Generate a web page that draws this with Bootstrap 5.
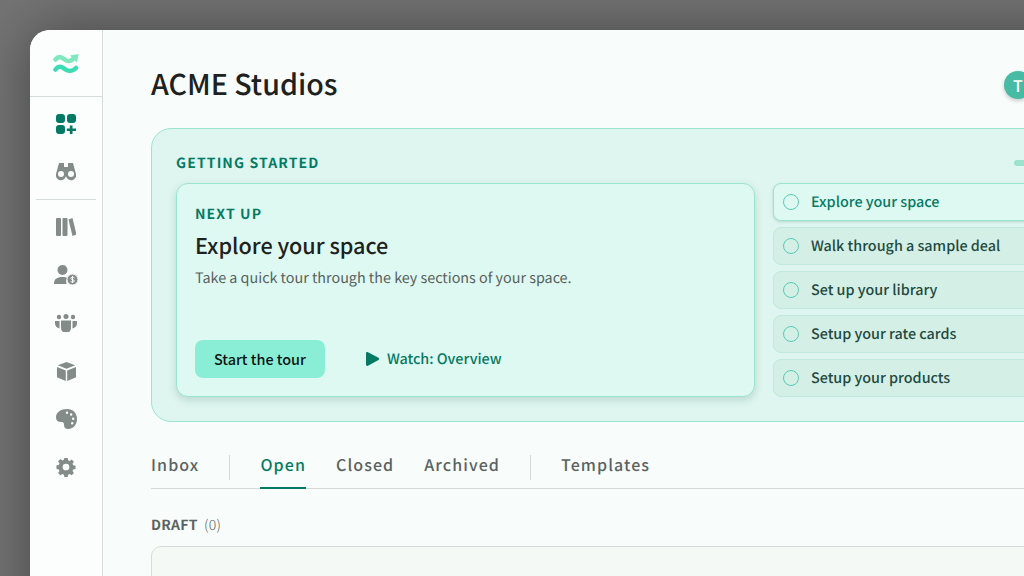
<!DOCTYPE html>
<html lang="en">
<head>
  <meta charset="UTF-8" />
  <title>ACME Studios</title>
  <link href="https://cdn.jsdelivr.net/npm/bootstrap@5.3.3/dist/css/bootstrap.min.css" rel="stylesheet" />
  <style>
    html, body { height: 100%; overflow: hidden; }
    body {
      font-family: "Noto Sans CJK SC", "Noto Sans", sans-serif;
      text-rendering: geometricPrecision;
      background: #747474;
      padding: 30px 0 0 30px;
    }
    .app-window {
      width: 1100px; height: 700px; border-radius: 20px 0 0 0; overflow: hidden;
      background: #f8fcfb; box-shadow: 0 0 60px rgba(0,0,0,.4);
    }
    .side-rail { width: 73px; background: #fcfefd; border-right: 1px solid #d6dcda; }
    .rail-logo { height: 67px; border-bottom: 1px solid #d6dcda; }
    .rail-icon { height: 48px; }
    .rail-icon.is-first { margin-top: 3px; }
    .rail-rule { width: 60px; height: 1px; background: #d6dcda; margin: 3px auto; }
    .main-area { padding: 33px 0 0 48px; width: 997px; }
    .page-title { font-size: 28.6px; font-weight: 500; line-height: 42px; color: #1d2120; margin: 0 0 2px; }
    .avatar-dot {
      width: 28px; height: 28px; border-radius: 50%; background: #48bba4; color: #fff;
      font-size: 16px; font-weight: 500; box-shadow: 0 2px 4px rgba(0,0,0,.2); margin-right: 68px;
    }
    .start-panel {
      margin-top: 21px; height: 294px; padding: 24px 24px 0; background: #def6ef;
      border: 1px solid #9be4cf; border-radius: 20px;
    }
    .eyebrow { font-size: 14px; font-weight: 700; letter-spacing: 1.12px; line-height: 20px; color: #047a65; }
    .progress-tick { width: 61px; height: 6px; border-radius: 3px; background: #9ce2cd; }
    .card-row { margin-top: 10px; }
    .next-card {
      width: 579px; height: 214px; padding: 20px 18px 18px; background: #def9f1;
      border: 1px solid #9be4cf; border-radius: 12px; box-shadow: 0 3px 8px rgba(0,60,50,.16);
    }
    .next-title { font-size: 21.6px; font-weight: 500; line-height: 30px; color: #1d2120; margin: 7px 0 0; }
    .next-copy { font-size: 14.35px; line-height: 22px; color: #59615f; margin: 6px 0 0; }
    .tour-btn {
      background: #8aedd6; border: 0; border-radius: 8px; height: 38px; padding: 0 19px;
      font-size: 14.4px; font-weight: 500; color: #0d1412;
    }
    .tour-btn:hover { background: #8aedd6; color: #0d1412; }
    .watch-link { font-size: 14.35px; font-weight: 500; color: #047a65; text-decoration: none; margin-left: 41px; gap: 8px; }
    .step-list { width: 300px; margin-left: 18px; gap: 6px; }
    .step-row {
      height: 38px; padding-left: 9px; gap: 12px; background: #d3efe6; border: 1px solid #c1e8dc;
      border-radius: 8px; font-size: 14.35px; font-weight: 500; color: #1f4a41;
    }
    .step-row.is-current { background: #def9f1; border-color: #9be4cf; color: #047a65; box-shadow: 0 1px 3px rgba(0,60,50,.18); }
    .step-ring { width: 16px; height: 16px; border: 1px solid #59cdb2; border-radius: 50%; flex: none; }
    .tab-bar { margin-top: 26px; height: 41px; gap: 30px; border-bottom: 1px solid #d2d9d7; }
    .tab-item {
      font-size: 16px; font-weight: 500; letter-spacing: 1.1px; line-height: 32px; height: 41px;
      color: #5b6361; text-decoration: none;
    }
    .tab-item.is-active { color: #047a65; border-bottom: 2px solid #047a65; }
    .tab-rule { width: 1px; height: 25px; background: #d2d9d7; margin-top: 7px; }
    .draft-head { margin-top: 26px; font-size: 14px; line-height: 20px; color: #5b6361; }
    .draft-head b { font-weight: 700; letter-spacing: .3px; }
    .draft-head span { margin-left: 3px; letter-spacing: .3px; font-weight: 300; }
    .draft-box { margin-top: 11px; height: 120px; background: #f4f9f6; border: 1px solid #d6dcda; border-radius: 10px; }
  </style>
</head>
<body>
  <div class="app-window d-flex">
    <!-- rail -->
    <div class="side-rail flex-shrink-0">
      <div class="rail-logo d-flex align-items-center justify-content-center">
        <svg width="26" height="22" viewBox="0 -1.500 26 22" fill="none" stroke-width="4.500" stroke-linecap="round">
          <path d="M2.500 6C5 3 8 3 11 5.500S17 9 21 4.500" stroke="#7fe8bf"/>
          <path d="M17 2l8.500-1.500L24 9z" fill="#7fe8bf"/>
          <path d="M2.500 16C5 12.500 8 12.500 11 15S19 18.500 23 14.500" stroke="#3bdcb4"/>
        </svg>
      </div>
      <div class="rail-icon is-first d-flex align-items-center justify-content-center">
        <svg width="20" height="20" viewBox="0 0 20 20" fill="#047a65">
          <rect width="9" height="9" rx="3"/><rect x="11" width="9" height="9" rx="3"/><rect y="11" width="9" height="9" rx="3"/>
          <path d="M13.800 11.500h2.700v3H20v2.600h-3.500V20h-2.700v-2.900h-3v-2.600h3z"/>
        </svg>
      </div>
      <div class="rail-icon d-flex align-items-center justify-content-center">
        <svg width="20" height="18" viewBox="0 0 20 18" fill="#848c8a">
          <path fill-rule="evenodd" d="M3 0h5v4h4V0h5l3 11a5 5 0 0 1-9.800 2.500H9.800A5 5 0 0 1 0 11zM5 8a3 3 0 1 0 0 6 3 3 0 0 0 0-6zm10 0a3 3 0 1 0 0 6 3 3 0 0 0 0-6z"/>
        </svg>
      </div>
      <div class="rail-rule"></div>
      <div class="rail-icon d-flex align-items-center justify-content-center">
        <svg width="20" height="18" viewBox="0 0 20 18" fill="#848c8a">
          <rect width="5" height="18" rx="1"/><rect x="6.500" width="5" height="18" rx="1"/><path d="M12.500 1.500l4-1.500 4 16.500-4 1.500z"/>
        </svg>
      </div>
      <div class="rail-icon d-flex align-items-center justify-content-center">
        <svg width="25" height="21" viewBox="0 0 25 21" fill="#848c8a">
          <circle cx="8.500" cy="5" r="5"/><path d="M0 19c0-5 3-7 8.500-7 2 0 3.500.300 4.700.900A7 7 0 0 0 12.500 19z"/>
          <circle cx="18.500" cy="14.500" r="5.500" stroke="#fcfefd" stroke-width="1"/>
          <path d="M20.500 12.800c-1-.8-3.700-.8-3.700.7s3.700 1 3.700 2.400-2.800 1.400-3.900.6M18.500 11v7" stroke="#fcfefd" stroke-width="1" fill="none"/>
        </svg>
      </div>
      <div class="rail-icon d-flex align-items-center justify-content-center">
        <svg width="22" height="18" viewBox="0 0 22 18" fill="#848c8a">
          <circle cx="4" cy="3" r="2.200"/><circle cx="11" cy="2.500" r="2.500"/><circle cx="18" cy="3" r="2.200"/>
          <path d="M0 7h4.500v7.500C2 14 0 12 0 9.500zM22 7h-4.500v7.500C20 14 22 12 22 9.500zM6 6.500h10V14a5 5 0 0 1-10 0z"/>
        </svg>
      </div>
      <div class="rail-icon d-flex align-items-center justify-content-center">
        <svg width="19" height="19" viewBox="0 0 19 19" fill="#848c8a">
          <path d="M9.500 0l8.700 3.300-8.700 3.500L.8 3.300zM0 5l8.800 3.500V19L1 15.800a1.500 1.500 0 0 1-1-1.400zM19 5l-8.800 3.500V19l7.800-3.200a1.500 1.500 0 0 0 1-1.400z"/>
        </svg>
      </div>
      <div class="rail-icon d-flex align-items-center justify-content-center">
        <svg width="21" height="20" viewBox="0 0 21 20" fill="#848c8a">
          <path fill-rule="evenodd" d="M11 0c6 0 10 4 10 10 0 6-4 10-9 10-3 0-4-2-4-4 0-2.500-1-3-3-3C2 13 0 11.500 0 8.500 0 3 5 0 11 0zM11 2.500a1.200 1.200 0 1 0 0 2.400 1.200 1.200 0 0 0 0-2.400zm4.200 1.800a1.200 1.200 0 1 0 0 2.400 1.200 1.200 0 0 0 0-2.400zm2 4.200a1.200 1.200 0 1 0 0 2.400 1.200 1.200 0 0 0 0-2.400zm-1 4.500a1.200 1.200 0 1 0 0 2.400 1.200 1.200 0 0 0 0-2.400z"/>
        </svg>
      </div>
      <div class="rail-icon d-flex align-items-center justify-content-center">
        <svg width="20" height="20" viewBox="-1 -1 22 22" fill="#848c8a">
          <path fill-rule="evenodd" d="M8.200 0h3.600l.5 2.600 1.700.7 2.200-1.500 2.500 2.500-1.500 2.200.7 1.700 2.600.5v3.600l-2.600.5-.7 1.700 1.500 2.200-2.500 2.500-2.200-1.500-1.700.7-.5 2.600H8.200l-.5-2.600-1.700-.7-2.200 1.500-2.500-2.500 1.500-2.200-.7-1.700L-.5 11.800V8.200l2.600-.5.7-1.700L1.300 3.800l2.500-2.500L6 2.800l1.700-.7zM10 6.300a3.700 3.700 0 1 0 0 7.400 3.700 3.700 0 0 0 0-7.400z"/>
        </svg>
      </div>
    </div>

    <!-- main -->
    <div class="main-area">
      <div class="d-flex align-items-center justify-content-between">
        <h1 class="page-title">ACME Studios</h1>
        <div class="avatar-dot d-flex align-items-center justify-content-center">T</div>
      </div>

      <div class="start-panel">
        <div class="d-flex align-items-center justify-content-between">
          <div class="eyebrow">GETTING STARTED</div>
          <div class="progress-tick"></div>
        </div>
        <div class="card-row d-flex">
          <div class="next-card d-flex flex-column">
            <div class="eyebrow">NEXT UP</div>
            <h2 class="next-title">Explore your space</h2>
            <p class="next-copy">Take a quick tour through the key sections of your space.</p>
            <div class="d-flex align-items-center mt-auto">
              <button type="button" class="btn tour-btn">Start the tour</button>
              <a href="#" class="watch-link d-flex align-items-center">
                <svg width="13" height="14" viewBox="0 0 13 14" fill="#047a65"><path d="M0 1.500C0 .3 1 -.2 2 .3l10.500 5.500c.8.500.8 1.800 0 2.300L2 13.700c-1 .5-2 0-2-1.200z"/></svg>
                Watch: Overview
              </a>
            </div>
          </div>
          <div class="step-list d-flex flex-column">
            <div class="step-row is-current d-flex align-items-center"><span class="step-ring"></span>Explore your space</div>
            <div class="step-row d-flex align-items-center"><span class="step-ring"></span>Walk through a sample deal</div>
            <div class="step-row d-flex align-items-center"><span class="step-ring"></span>Set up your library</div>
            <div class="step-row d-flex align-items-center"><span class="step-ring"></span>Setup your rate cards</div>
            <div class="step-row d-flex align-items-center"><span class="step-ring"></span>Setup your products</div>
          </div>
        </div>
      </div>

      <div class="tab-bar d-flex">
        <a href="#" class="tab-item">Inbox</a>
        <div class="tab-rule"></div>
        <a href="#" class="tab-item is-active">Open</a>
        <a href="#" class="tab-item">Closed</a>
        <a href="#" class="tab-item">Archived</a>
        <div class="tab-rule"></div>
        <a href="#" class="tab-item">Templates</a>
      </div>

      <div class="draft-head"><b>DRAFT</b> <span>(0)</span></div>
      <div class="draft-box"></div>
    </div>
  </div>
  <script src="https://cdn.jsdelivr.net/npm/bootstrap@5.3.3/dist/js/bootstrap.bundle.min.js"></script>
</body>
</html>
